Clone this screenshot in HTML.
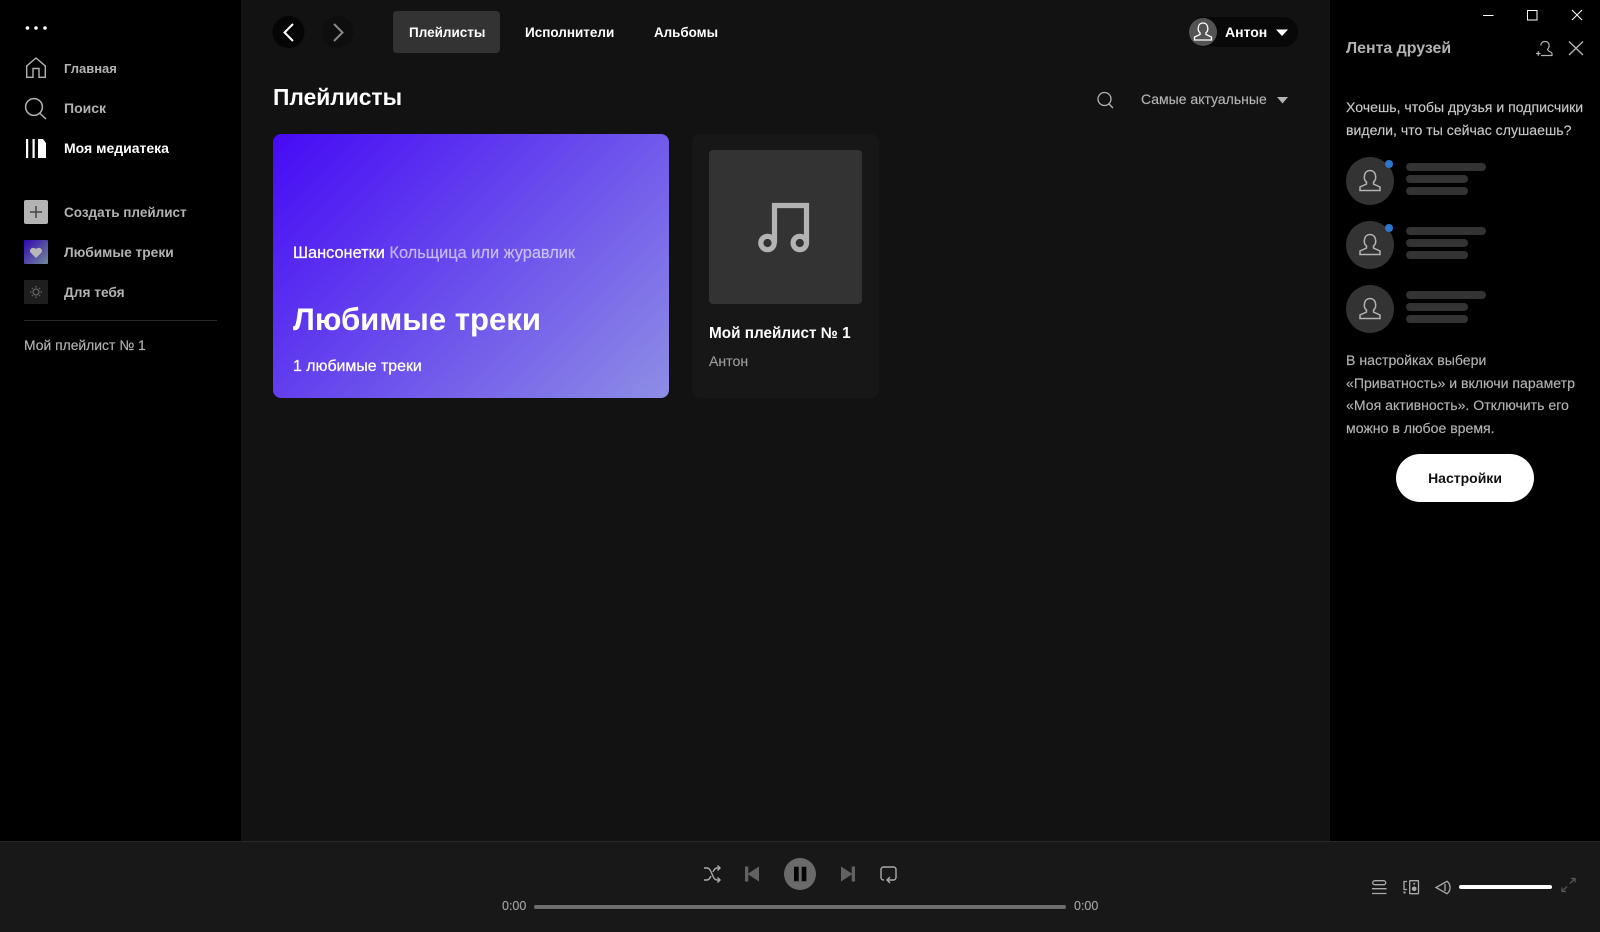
<!DOCTYPE html>
<html lang="ru"><head><meta charset="utf-8"><title>Плейлисты</title>
<style>
html,body{margin:0;padding:0;width:1600px;height:932px;overflow:hidden;background:#121212}
body{position:relative;font-family:"Liberation Sans","Noto Sans CJK SC",sans-serif;color:#b3b3b3}
.b{position:absolute}
.t{position:absolute;white-space:nowrap;line-height:20px;font-size:14px;font-weight:700}
.n{font-weight:400;-webkit-text-stroke:.15px currentColor}
svg{position:absolute;left:0;top:0}
</style></head><body>
<div class="b" style="left:0;top:0;width:241px;height:841px;background:#000"></div>
<div class="b" style="left:1330px;top:0;width:270px;height:841px;background:#000"></div>
<div class="b" style="left:0;top:841px;width:1600px;height:91px;background:#181818;border-top:1px solid #282828;box-sizing:border-box"></div>
<div class="b" style="left:393px;top:11px;width:107px;height:42px;background:#333;border-radius:4px"></div>
<div class="b" style="left:1189px;top:17px;width:109px;height:30px;background:#080808;border-radius:15px"></div>
<div class="b" style="left:273px;top:134px;width:396px;height:264px;border-radius:8px;background:linear-gradient(135deg,#450af5,#8e8ee5)"></div>
<div class="b" style="left:692px;top:134px;width:187px;height:264px;border-radius:8px;background:#171717"></div>
<div class="b" style="left:709px;top:150px;width:153px;height:154px;border-radius:4px;background:#333"></div>
<div class="b" style="left:1396px;top:454px;width:138px;height:48px;border-radius:24px;background:#fff"></div>

<svg width="1600" height="932" viewBox="0 0 1600 932" fill="none">
<defs>
<linearGradient id="h" x1="0" y1="0" x2="1" y2="1"><stop offset="0" stop-color="#450af5"/><stop offset="1" stop-color="#9fc0d5"/></linearGradient>
<path id="u" d="M-10 10H10V6.500L3.500 3.500V1.500C5.500 0 6-2.500 5.500-5C5-8.500 2.500-10 0-10C-2.500-10-5-8.500-5.500-5C-6-2.500-5.500 0-3.500 1.500V3.500L-10 6.500Z"/>
</defs>
<g fill="#fff"><circle cx="27.500" cy="28" r="1.800"/><circle cx="36" cy="28" r="1.800"/><circle cx="45" cy="28" r="1.800"/></g>
<path d="M26.700 77.300V66L36 58L45.300 66V77.300H39V68.500H33V77.300Z" stroke="#b3b3b3" stroke-width="1.400"/>
<circle cx="34" cy="107" r="8.400" stroke="#b3b3b3" stroke-width="1.500"/><path d="M40 113.500L46 119" stroke="#b3b3b3" stroke-width="1.500"/>
<path d="M26 139h2.200v19H26zM32.500 139h2.200v19h-2.200zM38 139h5l3 4v15h-8z" fill="#fff"/>
<rect x="24" y="200" width="24" height="24" rx="2" fill="#b3b3b3"/><path d="M30 212H42M36 206V218" stroke="#444" stroke-width="1.500"/>
<g opacity=".72"><rect x="24" y="240" width="24" height="24" rx="1" fill="url(#h)"/><path d="M36 258L30.500 252.500C28.500 249.500 32.500 246 36 249C39.500 246 43.500 249.500 41.500 252.500Z" fill="#fff"/></g>
<rect x="24" y="280" width="24" height="24" rx="1" fill="#1e1e1e"/><circle cx="36" cy="292" r="3" stroke="#777"/><path d="M36 286v1.500M36 296.500v1.500M30 292h1.500M40.500 292h1.500M31.800 287.800l1 1M39.200 295.200l1 1M31.800 296.200l1-1M39.200 288.800l1-1" stroke="#777"/>
<rect x="24" y="320" width="193" height="1" fill="#282828"/>

<circle cx="288.500" cy="32" r="16" fill="#050505"/><path d="M293 24L284.500 32.500L293 41" stroke="#fff" stroke-width="2"/>
<circle cx="337.500" cy="32" r="16" fill="#0e0e0e"/><path d="M334 24L342.500 32.500L334 41" stroke="#888" stroke-width="2"/>

<circle cx="1203" cy="32" r="14" fill="#535353"/><use href="#u" transform="translate(1203 31.500) scale(.85)" stroke="#fff" stroke-width="1.600"/>
<path d="M1276 29.500H1288L1282 36Z" fill="#fff"/>
<circle cx="1104.500" cy="99" r="6.500" stroke="#b3b3b3" stroke-width="1.300"/><path d="M1109 104L1113 108" stroke="#b3b3b3" stroke-width="1.300"/>
<path d="M1277 97H1288L1282.500 103.500Z" fill="#b3b3b3"/>

<rect x="1483" y="15" width="10.500" height="1" fill="#fff"/>
<rect x="1527.500" y="10.500" width="9.500" height="9.500" stroke="#fff"/>
<path d="M1572 10L1582 20M1582 10L1572 20" stroke="#fff"/>
<path d="M1541 55.500H1552V53.500C1552 52 1548 51.500 1547.500 49.500C1548.800 48 1549.200 47 1549.200 45.500C1549.200 43 1547.500 41.500 1545 41.500C1542.500 41.500 1540.800 43 1540.800 45.500" stroke="#b3b3b3" stroke-width="1.200"/>
<path d="M1536 53.500H1540.500M1538.300 51.300V55.800" stroke="#b3b3b3" stroke-width="1.200"/>
<path d="M1569 41.500L1583 55M1583 41.500L1569 55" stroke="#b3b3b3" stroke-width="1.400"/>

<g fill="#333">
<circle cx="1370" cy="181" r="24"/><circle cx="1370" cy="245" r="24"/><circle cx="1370" cy="309" r="24"/>
<rect x="1406" y="163" width="80" height="8" rx="4"/><rect x="1406" y="175" width="62" height="8" rx="4"/><rect x="1406" y="187" width="62" height="8" rx="4"/>
<rect x="1406" y="227" width="80" height="8" rx="4"/><rect x="1406" y="239" width="62" height="8" rx="4"/><rect x="1406" y="251" width="62" height="8" rx="4"/>
<rect x="1406" y="291" width="80" height="8" rx="4"/><rect x="1406" y="303" width="62" height="8" rx="4"/><rect x="1406" y="315" width="62" height="8" rx="4"/>
</g>
<g stroke="#b3b3b3" stroke-width="1.500"><use href="#u" x="1370" y="180.500"/><use href="#u" x="1370" y="244.500"/><use href="#u" x="1370" y="308.500"/></g>
<circle cx="1389" cy="164" r="4" fill="#2e77d0"/><circle cx="1389" cy="228" r="4" fill="#2e77d0"/>

<path d="M774.500 243V205.500H806.500V243" stroke="#b3b3b3" stroke-width="5.200"/>
<circle cx="767.500" cy="243" r="6.700" stroke="#b3b3b3" stroke-width="5.200"/><circle cx="799.800" cy="243" r="6.700" stroke="#b3b3b3" stroke-width="5.200"/>

<g stroke="#aaa" stroke-width="1.400">
<path d="M704 868H707C712 868 712 880 717 880H720M704 880H707C709 880 710 878 711 876M713 872C714 869.500 715 868 717 868H720M717.500 865.500L720 868L717.500 870.500M717.500 877.500L720 880L717.500 882.500"/>
<path d="M884 880H883.500A2.500 2.500 0 0 1 881 877.500V869.500A2.500 2.500 0 0 1 883.500 867H893.500A2.500 2.500 0 0 1 896 869.500V877.500A2.500 2.500 0 0 1 893.500 880H887M890 877L887 880L890 883"/>
</g>
<path d="M745 866.500h3.300v15H745zM759 866.500V881.500L747.500 874Z" fill="#626262"/>
<path d="M855 866.500h-3.300v15h3.300zM841 866.500V881.500L852.500 874Z" fill="#626262"/>
<circle cx="800" cy="874" r="16" fill="#6a6a6a"/><path d="M794 866.700h4.700v14.500H794zM801.700 866.700h4.700v14.500h-4.700z" fill="#050505"/>
<rect x="534" y="905" width="532" height="4" rx="2" fill="#6f6f6f"/>

<g stroke="#aaa" stroke-width="1.300">
<rect x="1372.700" y="880.700" width="13" height="4" rx="2"/><path d="M1372 888.700H1386.500M1372 893.500H1386.500"/>
<rect x="1409.700" y="880.700" width="8.800" height="13" rx=".5"/><path d="M1407 881.500H1404V889.500H1407"/>
<path d="M1436 887.500L1447 881.300C1451 884 1451 891 1447 893.700Z"/><path d="M1445 884V891"/>
</g>
<circle cx="1414.200" cy="883.700" r="1" fill="#aaa"/><circle cx="1414.200" cy="888.800" r="2.300" fill="#aaa"/><rect x="1403.500" y="891.500" width="2" height="2" fill="#aaa"/>
<rect x="1459" y="885" width="93" height="4" rx="2" fill="#fff"/>
<path d="M1562 891.500L1567 886.500M1570 883.500L1575 878.500M1571 878.500H1575V882.500M1562 887.500V891.500H1566" stroke="#555" stroke-width="1.300"/>
</svg>

<div class="t" style="left:64px;top:59px;font-size:13px">Главная</div>
<div class="t" style="left:64px;top:98px;font-size:14px">Поиск</div>
<div class="t" style="left:64px;top:138px;font-size:14px;color:#fff">Моя медиатека</div>
<div class="t" style="left:64px;top:203px;font-size:13.500px">Создать плейлист</div>
<div class="t" style="left:64px;top:243px;font-size:13.750px">Любимые треки</div>
<div class="t" style="left:64px;top:283px;font-size:13.700px">Для тебя</div>
<div class="t n" style="left:24px;top:335px;font-size:13.900px">Мой плейлист № 1</div>

<div class="t" style="left:409px;top:23px;font-size:13.500px;color:#fff">Плейлисты</div>
<div class="t" style="left:525px;top:23px;font-size:13.500px;color:#fff">Исполнители</div>
<div class="t" style="left:654px;top:23px;font-size:13.400px;color:#fff">Альбомы</div>
<div class="t" style="left:273px;top:87px;font-size:22.800px;color:#fff">Плейлисты</div>
<div class="t" style="left:1225px;top:22px;font-size:14px;color:#fff">Антон</div>
<div class="t n" style="left:1141px;top:89px;font-size:14px">Самые актуальные</div>

<div class="t n" style="left:293px;top:243px;font-size:16.350px;color:#fff;-webkit-text-stroke:.25px #fff">Шансонетки <span style="color:rgba(255,255,255,.6);-webkit-text-stroke:.15px rgba(255,255,255,.6)">Кольщица или журавлик</span></div>
<div class="t" style="left:293px;top:309px;font-size:31.100px;color:#fff;line-height:22px">Любимые треки</div>
<div class="t n" style="left:293px;top:357px;font-size:15.900px;color:#fff;-webkit-text-stroke:.25px #fff">1 любимые треки</div>
<div class="t" style="left:709px;top:324px;font-size:15.300px;color:#fff">Мой плейлист № 1</div>
<div class="t n" style="left:709px;top:351px;font-size:14.100px;color:#9a9a9a">Антон</div>

<div class="t" style="left:1346px;top:39px;font-size:15.900px">Лента друзей</div>
<div class="t n" style="left:1346px;top:97px;font-size:14.100px;color:#c8c8c8">Хочешь, чтобы друзья и подписчики</div>
<div class="t n" style="left:1346px;top:120px;font-size:14.100px;color:#c8c8c8">видели, что ты сейчас слушаешь?</div>
<div class="t n" style="left:1346px;top:350px;font-size:14.100px">В настройках выбери</div>
<div class="t n" style="left:1346px;top:373px;font-size:14.100px">«Приватность» и включи параметр</div>
<div class="t n" style="left:1346px;top:395px;font-size:14.100px">«Моя активность». Отключить его</div>
<div class="t n" style="left:1346px;top:418px;font-size:14.100px">можно в любое время.</div>
<div class="t" style="left:1396px;width:138px;top:468px;text-align:center;font-size:14px;color:#111">Настройки</div>

<div class="t n" style="left:502px;top:895px;font-size:12.500px;color:#a0a0a0;line-height:22px">0:00</div>
<div class="t n" style="left:1074px;top:895px;font-size:12.500px;color:#a0a0a0;line-height:22px">0:00</div>
</body></html>
